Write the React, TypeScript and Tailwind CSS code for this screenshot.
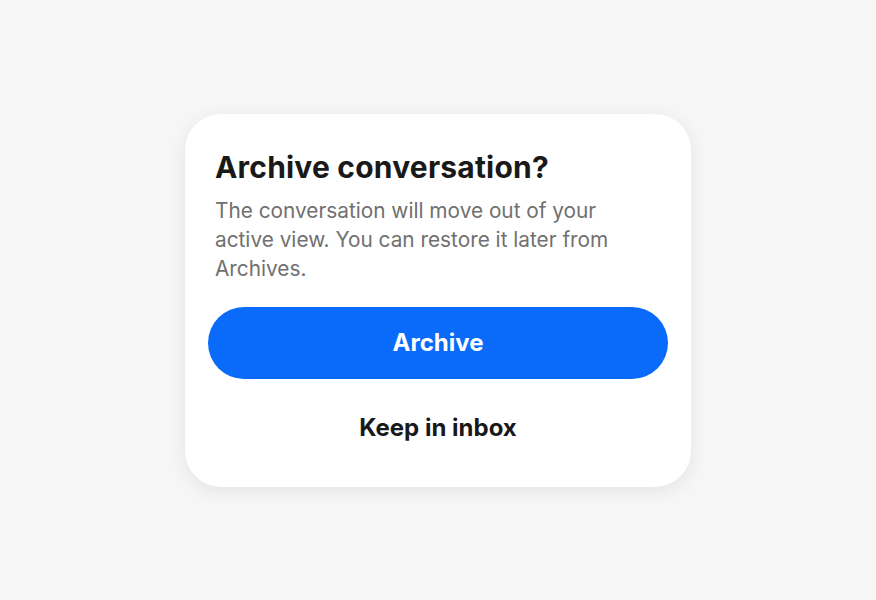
import React from "react";

export default function App() {
  return (
    <div
      className="w-[876px] h-[600px] bg-[#f6f6f6] flex items-center justify-center"
      style={{ fontFamily: "Inter, 'Noto Sans', sans-serif" }}
    >
      <div className="w-[506px] bg-white rounded-[36px] shadow-[0_4px_18px_rgba(0,0,0,0.08)] px-[23px] pt-[35px] pb-[31px] flex flex-col">
        <div className="px-[7px]">
          <h1 className="text-[30px] leading-[36px] font-bold text-[#191919] tracking-[0.2px]">
            Archive conversation?
          </h1>
          <p className="mt-[11px] w-[410px] text-[20.8px] leading-[29px] text-[#707070]">
            The conversation will move out of your active view. You can restore it later from Archives.
          </p>
        </div>
        <button className="mt-[24px] h-[72px] w-full rounded-full bg-[#0a6bfb] text-white text-[24px] font-bold">
          Archive
        </button>
        <button className="mt-[21px] h-[56px] w-full text-[#191919] text-[24px] font-bold">
          Keep in inbox
        </button>
      </div>
    </div>
  );
}
